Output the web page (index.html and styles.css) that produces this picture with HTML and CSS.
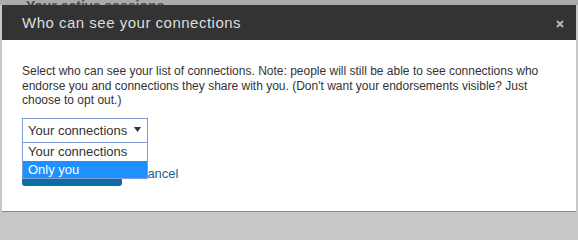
FILE: index.html
```html
<!DOCTYPE html>
<html>
<head>
<meta charset="utf-8">
<link rel="stylesheet" href="styles.css">
</head>
<body>
<div class="page">
  <div class="strip"><span class="strip-text">Your active sessions</span></div>
</div>
<div class="dialog">
  <div class="dialog-header">
    <span class="dialog-title">Who can see your connections</span>
    <svg class="close" width="8" height="8" viewBox="0 0 8 8"><path d="M1 1L7 7M7 1L1 7" stroke="#b5b5b5" stroke-width="2"/></svg>
  </div>
  <div class="dialog-body">
    <p class="desc">Select who can see your list of connections. Note: people will still be able to see connections who endorse you and connections they share with you. (Don't want your endorsements visible? Just choose to opt out.)</p>
    <div class="select-wrap">
      <div class="select">
        <span>Your connections</span>
        <svg class="arrow" width="7" height="5" viewBox="0 0 7 5"><path d="M0 0H7L3.5 5Z" fill="#333"/></svg>
      </div>
      <div class="options">
        <div class="option">Your connections</div>
        <div class="option selected">Only you</div>
      </div>
    </div>
    <div class="actions">
      <button class="btn">Save changes</button>
      <a class="cancel">Cancel</a>
    </div>
  </div>
</div>
</body>
</html>
```
FILE: styles.css
```css
html, body {
  margin: 0;
  padding: 0;
}
body {
  width: 578px;
  height: 214px;
  background: #c8c8c8;
  overflow: hidden;
  position: relative;
  font-family: "Liberation Sans", Arial, sans-serif;
}
.strip {
  height: 5px;
  background: #ababab;
  overflow: hidden;
}
.strip-text {
  display: block;
  margin-top: -2px;
  padding-left: 26px;
  font-size: 14px;
  line-height: 16px;
  font-weight: bold;
  color: #4a4a4a;
}
.dialog {
  position: absolute;
  left: 2px;
  top: 5px;
  width: 574px;
  height: 206px;
  background: #fff;
  border-bottom: 1px solid #8a8a8a;
}
.dialog-header {
  height: 35px;
  background: #333;
  display: flex;
  align-items: center;
  justify-content: space-between;
  padding: 0 12px 0 20px;
}
.dialog-title {
  color: #dedede;
  font-size: 15px;
  letter-spacing: 0.5px;
}
.close {
  margin-top: 3px;
}
.dialog-body {
  padding: 24px 20px 0 20px;
}
.desc {
  margin: 0;
  font-size: 12px;
  line-height: 14.5px;
  color: #333;
  padding-right: 8px;
}
.select-wrap {
  position: relative;
  width: 126px;
  margin-top: 10px;
}
.select {
  box-sizing: border-box;
  height: 25px;
  border: 1px solid #7d9dd4;
  display: flex;
  align-items: center;
  justify-content: space-between;
  padding: 0 6px 0 5px;
  font-size: 13px;
  color: #333;
}
.arrow {
  margin-top: -1px;
}
.options {
  position: absolute;
  top: 100%;
  left: 0;
  width: 126px;
  box-sizing: border-box;
  border: 1px solid #7d9dd4;
  border-top: none;
  background: #fff;
  z-index: 2;
}
.option {
  font-size: 13px;
  color: #333;
  padding-left: 5px;
  height: 18px;
  line-height: 17px;
}
.option.selected {
  background: #1e90ff;
  color: #fff;
  height: 17px;
  line-height: 17px;
}
.actions {
  display: flex;
  align-items: center;
  gap: 16px;
  margin-top: 15px;
}
.btn {
  width: 100px;
  height: 28px;
  border: none;
  border-radius: 3px;
  background: #0c6da4;
  color: #fff;
  font-family: "Liberation Sans", Arial, sans-serif;
  font-size: 13px;
  font-weight: bold;
  padding: 0;
}
.cancel {
  font-size: 13px;
  color: #235f8f;
  margin-top: 4px;
}
```
